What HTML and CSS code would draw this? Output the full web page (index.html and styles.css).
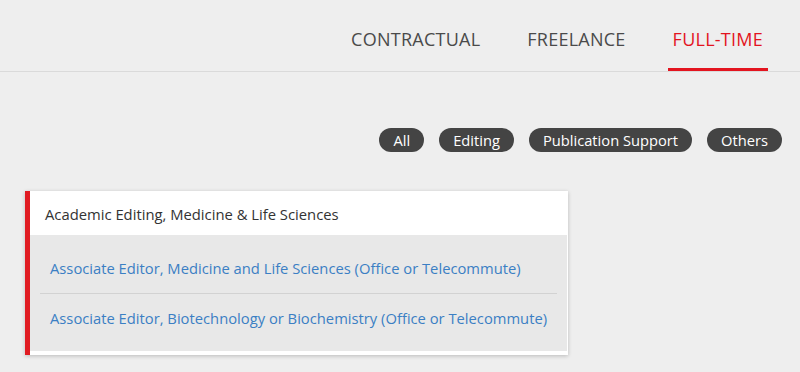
FILE: index.html
```
<!DOCTYPE html>
<html lang="en">
<head>
<meta charset="utf-8">
<title>Careers</title>
<link rel="stylesheet" href="styles.css">
</head>
<body>
<nav class="tabs">
  <a class="tab" href="#">CONTRACTUAL</a>
  <a class="tab" href="#">FREELANCE</a>
  <a class="tab active" href="#">FULL-TIME</a>
</nav>
<div class="filters">
  <a class="pill" href="#">All</a>
  <a class="pill" href="#">Editing</a>
  <a class="pill" href="#">Publication Support</a>
  <a class="pill" href="#">Others</a>
</div>
<section class="card">
  <div class="card-head">Academic Editing, Medicine &amp; Life Sciences</div>
  <ul class="card-body">
    <li class="job"><a href="#">Associate Editor, Medicine and Life Sciences (Office or Telecommute)</a></li>
    <li class="job"><a href="#">Associate Editor, Biotechnology or Biochemistry (Office or Telecommute)</a></li>
  </ul>
</section>
</body>
</html>
```
FILE: styles.css
```
html, body {
  margin: 0;
  padding: 0;
}
body {
  background: #eeeeee;
  font-family: "Open Sans", "Liberation Sans", sans-serif;
  width: 800px;
  height: 372px;
  overflow: hidden;
}
a {
  text-decoration: none;
}
.tabs {
  display: flex;
  justify-content: flex-end;
  gap: 37px;
  padding-right: 32px;
  border-bottom: 1px solid #dadada;
}
.tab {
  display: block;
  font-size: 18px;
  letter-spacing: 0.25px;
  line-height: 24px;
  padding: 27px 5px 17px;
  color: #4a4a4a;
  border-bottom: 3px solid transparent;
}
.tab.active {
  color: #e3141f;
  border-bottom-color: #e3141f;
}
.filters {
  display: flex;
  justify-content: flex-end;
  gap: 15px;
  padding-right: 18px;
  margin-top: 56px;
}
.pill {
  display: block;
  height: 24px;
  line-height: 24px;
  padding: 0 14px;
  border-radius: 12px;
  background: #444444;
  color: #ffffff;
  font-size: 14.7px;
}
.card {
  width: 538px;
  margin: 39px 0 0 25px;
  background: #ffffff;
  border-left: 5px solid #e01b22;
  padding-bottom: 4px;
  box-shadow: 0 1px 4px rgba(0, 0, 0, 0.22);
}
.card-head {
  font-size: 14.8px;
  line-height: 20px;
  padding: 13px 15px 11px;
  color: #333333;
}
.card-body {
  list-style: none;
  margin: 0 1px 0 0;
  padding: 8px 10px;
  background: #e8e8e8;
}
.job {
  padding: 15px 10px;
  font-size: 14.75px;
  line-height: 20px;
  white-space: nowrap;
}
.job + .job {
  border-top: 1px solid #d2d2d2;
  padding-top: 14px;
}
.job a {
  color: #3b7fc4;
}
```
